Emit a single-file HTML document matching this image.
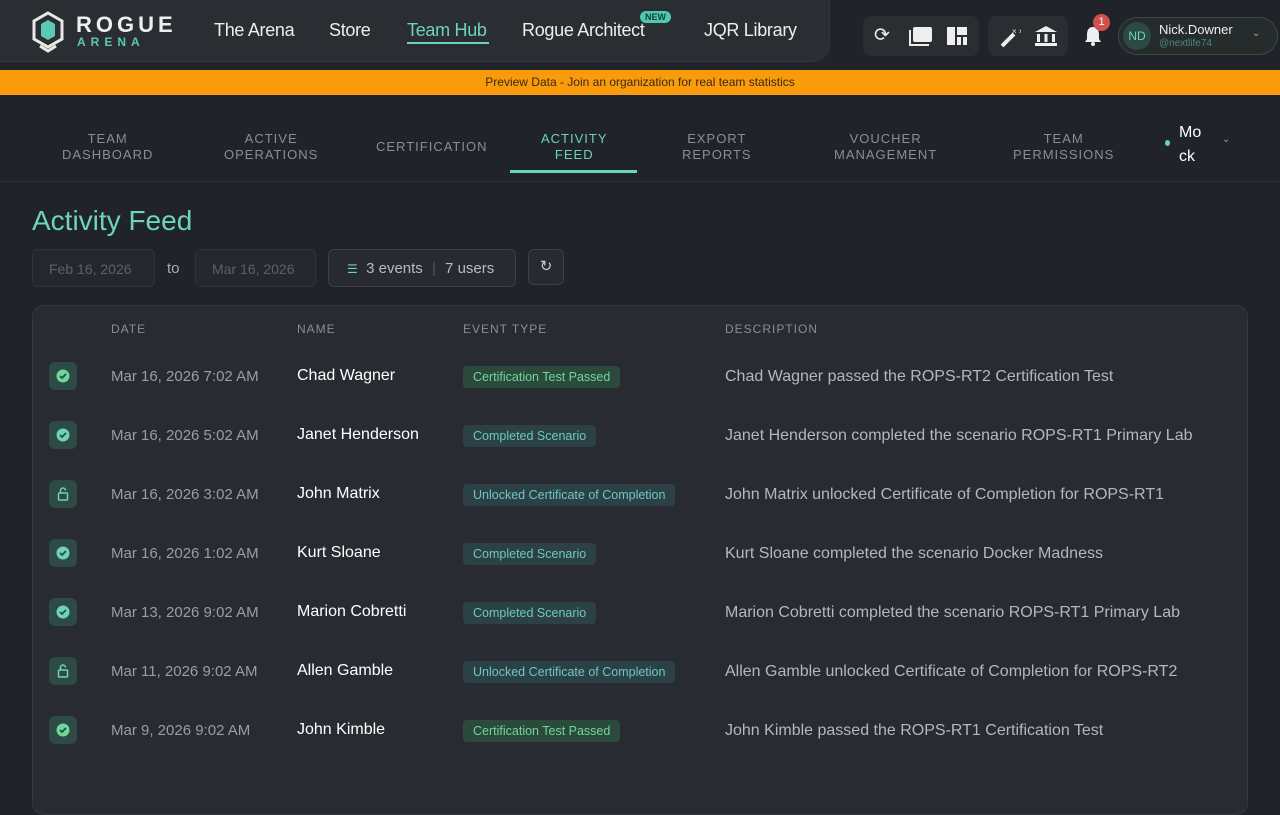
<!DOCTYPE html>
<html><head><meta charset="utf-8"><style>
*{box-sizing:border-box;margin:0;padding:0}
body{width:1280px;height:800px;overflow:hidden;background:#202329;font-family:"Liberation Sans",sans-serif;color:#ddd;position:relative}
.top{position:absolute;left:0;top:0;width:830px;height:62px;background:#2a2d32;border-bottom-right-radius:18px;border:1px solid #34373c;border-top:none;border-left:none}
.nav{position:absolute;top:20px;font-size:18px;color:#eee;letter-spacing:-0.3px}
.orange{position:absolute;left:0;top:70px;width:1280px;height:25px;background:#f99b0b;color:#3a2a10;font-size:12px;text-align:center;line-height:25px}
.grp{position:absolute;top:16px;height:40px;background:#2a2d32;border-radius:8px}
.ic{position:absolute;top:26px}
.tab{position:absolute;top:131px;font-size:13px;letter-spacing:1px;color:#8a8e94;text-align:center;line-height:16px}
.card{position:absolute;left:32px;top:305px;width:1216px;height:510px;background:#282b31;border:1px solid #35383e;border-radius:12px}
.th{position:absolute;top:322px;font-size:12px;letter-spacing:1px;color:#8a8e94}
.row{position:absolute;left:0;width:1280px;height:30px}
.row .i{position:absolute;left:49px;top:0;width:28px;height:28px;border-radius:6px;background:#2d4a44}
.row .d{position:absolute;left:111px;top:6px;font-size:15px;color:#9a9ea4}
.row .n{position:absolute;left:297px;top:5px;font-size:16px;color:#fff}
.row .b{position:absolute;left:463px;top:4px;height:22px;padding:0 10px;line-height:22px;font-size:12.5px;border-radius:4px;white-space:nowrap}
.g{background:#2b4a3c;color:#6fd69c}.t{background:#2b4145;color:#6cc9bd}
.row .s{position:absolute;left:725px;top:6px;font-size:16px;color:#b4b8bd}
.inp{position:absolute;top:249px;height:38px;border:1px solid #30333a;border-radius:6px;background:#24272c;color:#5d6168;font-size:14px;padding:11px 0 0 16px;white-space:nowrap}
</style></head><body>
<div class="top"></div>
<svg style="position:absolute;left:30px;top:11px" width="36" height="42" viewBox="0 0 36 42"><path d="M18 2 L32 10 V28 L18 36 L4 28 V10Z" fill="none" stroke="#e8e8e8" stroke-width="3"/><path d="M18 9 L25 13 V25 L18 29 L11 25 V13Z" fill="#5cc9b5"/><path d="M10 35 L18 40 L26 35" fill="none" stroke="#e8e8e8" stroke-width="3"/></svg>
<div style="position:absolute;left:76px;top:12px;font-size:22px;font-weight:bold;letter-spacing:4px;color:#eee">ROGUE</div>
<div style="position:absolute;left:77px;top:35px;font-size:12px;letter-spacing:5px;color:#5cc9b5;font-weight:bold">ARENA</div>
<div class="nav" style="left:214px">The Arena</div>
<div class="nav" style="left:329px">Store</div>
<div class="nav" style="left:407px;color:#6cd3bd">Team Hub</div>
<div style="position:absolute;left:407px;top:42px;width:82px;height:2px;background:#6cd3bd"></div>
<div class="nav" style="left:522px">Rogue Architect</div>
<div style="position:absolute;left:640px;top:11px;background:#4fc9b1;color:#143;font-size:9px;font-weight:bold;padding:1px 5px;border-radius:6px">NEW</div>
<div class="nav" style="left:704px">JQR Library</div>
<div class="grp" style="left:863px;width:116px"></div>
<div class="grp" style="left:988px;width:80px"></div>
<div class="ic" style="left:874px;font-size:19px;color:#eee;top:24px">⟳</div>
<svg class="ic" style="left:909px" width="24" height="20"><rect x="4" y="1" width="19" height="15" rx="2" fill="#eee"/><path d="M1 4 V19 H20" stroke="#eee" stroke-width="2" fill="none"/></svg>
<svg class="ic" style="left:947px;top:27px" width="20" height="18"><rect x="0" y="0" width="8" height="18" fill="#eee"/><rect x="10" y="0" width="10" height="8" fill="#eee"/><rect x="10" y="10" width="4" height="8" fill="#eee"/><rect x="16" y="10" width="4" height="8" fill="#eee"/></svg>
<svg class="ic" style="left:999px" width="22" height="22"><path d="M3 20 L15 8" stroke="#eee" stroke-width="4"/><text x="13" y="8" font-size="8" fill="#eee">× ×</text></svg>
<svg class="ic" style="left:1034px;top:25px" width="24" height="22"><path d="M12 1 L23 7 H1Z" fill="#eee"/><rect x="3" y="9" width="3" height="8" fill="#eee"/><rect x="10.5" y="9" width="3" height="8" fill="#eee"/><rect x="18" y="9" width="3" height="8" fill="#eee"/><rect x="1" y="18" width="22" height="3" fill="#eee"/></svg>
<svg class="ic" style="left:1083px;top:25px" width="20" height="22"><path d="M10 2 C5 2 4 6 4 10 V14 L2 17 H18 L16 14 V10 C16 6 15 2 10 2Z" fill="#eee"/><circle cx="10" cy="19" r="2" fill="#eee"/></svg>
<div style="position:absolute;left:1093px;top:14px;width:17px;height:17px;border-radius:50%;background:#d34f4f;color:#fff;font-size:11px;text-align:center;line-height:17px">1</div>
<div style="position:absolute;left:1118px;top:17px;width:160px;height:38px;border:1px solid #3a4a46;border-radius:19px;background:#262b2c"></div>
<div style="position:absolute;left:1123px;top:22px;width:28px;height:28px;border-radius:50%;background:#2c4a44;color:#6cd3bd;font-size:12px;text-align:center;line-height:28px">ND</div>
<div style="position:absolute;left:1159px;top:22px;font-size:13px;color:#eee">Nick.Downer</div>
<div style="position:absolute;left:1159px;top:38px;font-size:10px;color:#4a8a7c">@nextlife74</div>
<div style="position:absolute;left:1252px;top:28px;font-size:10px;color:#aaa">⌄</div>
<div class="orange">Preview Data - Join an organization for real team statistics</div>
<div class="tab" style="left:62px">TEAM<br>DASHBOARD</div>
<div class="tab" style="left:224px">ACTIVE<br>OPERATIONS</div>
<div class="tab" style="left:376px;top:139px">CERTIFICATION</div>
<div class="tab" style="left:541px;color:#6cd3bd">ACTIVITY<br>FEED</div>
<div style="position:absolute;left:510px;top:170px;width:127px;height:3px;background:#6cd3bd"></div>
<div class="tab" style="left:682px">EXPORT<br>REPORTS</div>
<div class="tab" style="left:834px">VOUCHER<br>MANAGEMENT</div>
<div class="tab" style="left:1013px">TEAM<br>PERMISSIONS</div>
<div style="position:absolute;left:1165px;top:140px;width:5px;height:6px;border-radius:50%;background:#6cd3bd"></div>
<div style="position:absolute;left:1179px;top:121px;font-size:16px;color:#fff;line-height:24px">Mo<br>ck</div>
<div style="position:absolute;left:1222px;top:134px;font-size:10px;color:#999">⌄</div>
<div style="position:absolute;left:0;top:181px;width:1280px;height:1px;background:#2e3136"></div>
<div style="position:absolute;left:32px;top:205px;font-size:28px;color:#6cd3bd">Activity Feed</div>
<div class="inp" style="left:32px;width:123px">Feb 16, 2026</div>
<div style="position:absolute;left:167px;top:260px;font-size:15px;color:#aaa">to</div>
<div class="inp" style="left:195px;width:121px">Mar 16, 2026</div>
<div style="position:absolute;left:328px;top:249px;width:188px;height:38px;border:1px solid #3c4046;border-radius:6px;background:#272a30;color:#bbb;font-size:15px;padding:10px 0 0 18px;white-space:nowrap"><span style="color:#6cd3bd;font-size:12px">☰</span>&nbsp; 3 events <span style="color:#555;margin:0 5px">|</span> 7 users</div>
<div style="position:absolute;left:528px;top:249px;width:36px;height:36px;border:1px solid #3c4046;border-radius:6px;background:#272a30;color:#ccc;font-size:15px;text-align:center;line-height:34px">↻</div>
<div class="card"></div>
<div class="th" style="left:111px">DATE</div>
<div class="th" style="left:297px">NAME</div>
<div class="th" style="left:463px">EVENT TYPE</div>
<div class="th" style="left:725px">DESCRIPTION</div>

<div class="row" style="top:362px"><div class="i"><svg width="28" height="28"><circle cx="14" cy="14" r="6.5" fill="#6fd69c"/><path d="M11 14 L13 16 L17 12" stroke="#2d4a44" stroke-width="1.8" fill="none"/></svg></div><div class="d">Mar 16, 2026 7:02 AM</div><div class="n">Chad Wagner</div><div class="b g">Certification Test Passed</div><div class="s">Chad Wagner passed the ROPS-RT2 Certification Test</div></div>
<div class="row" style="top:421px"><div class="i"><svg width="28" height="28"><circle cx="14" cy="14" r="6.5" fill="#6cd3bd"/><path d="M11 14 L13 16 L17 12" stroke="#2d4a44" stroke-width="1.8" fill="none"/></svg></div><div class="d">Mar 16, 2026 5:02 AM</div><div class="n">Janet Henderson</div><div class="b t">Completed Scenario</div><div class="s">Janet Henderson completed the scenario ROPS-RT1 Primary Lab</div></div>
<div class="row" style="top:480px"><div class="i"><svg width="28" height="28"><rect x="9.5" y="13" width="9" height="7" rx="1" fill="none" stroke="#6cd3bd" stroke-width="1.5"/><path d="M11.5 13 V10.5 A2.5 2.5 0 0 1 16.5 10.5" fill="none" stroke="#6cd3bd" stroke-width="1.5"/></svg></div><div class="d">Mar 16, 2026 3:02 AM</div><div class="n">John Matrix</div><div class="b t">Unlocked Certificate of Completion</div><div class="s">John Matrix unlocked Certificate of Completion for ROPS-RT1</div></div>
<div class="row" style="top:539px"><div class="i"><svg width="28" height="28"><circle cx="14" cy="14" r="6.5" fill="#6cd3bd"/><path d="M11 14 L13 16 L17 12" stroke="#2d4a44" stroke-width="1.8" fill="none"/></svg></div><div class="d">Mar 16, 2026 1:02 AM</div><div class="n">Kurt Sloane</div><div class="b t">Completed Scenario</div><div class="s">Kurt Sloane completed the scenario Docker Madness</div></div>
<div class="row" style="top:598px"><div class="i"><svg width="28" height="28"><circle cx="14" cy="14" r="6.5" fill="#6cd3bd"/><path d="M11 14 L13 16 L17 12" stroke="#2d4a44" stroke-width="1.8" fill="none"/></svg></div><div class="d">Mar 13, 2026 9:02 AM</div><div class="n">Marion Cobretti</div><div class="b t">Completed Scenario</div><div class="s">Marion Cobretti completed the scenario ROPS-RT1 Primary Lab</div></div>
<div class="row" style="top:657px"><div class="i"><svg width="28" height="28"><rect x="9.5" y="13" width="9" height="7" rx="1" fill="none" stroke="#6cd3bd" stroke-width="1.5"/><path d="M11.5 13 V10.5 A2.5 2.5 0 0 1 16.5 10.5" fill="none" stroke="#6cd3bd" stroke-width="1.5"/></svg></div><div class="d">Mar 11, 2026 9:02 AM</div><div class="n">Allen Gamble</div><div class="b t">Unlocked Certificate of Completion</div><div class="s">Allen Gamble unlocked Certificate of Completion for ROPS-RT2</div></div>
<div class="row" style="top:716px"><div class="i"><svg width="28" height="28"><circle cx="14" cy="14" r="6.5" fill="#6fd69c"/><path d="M11 14 L13 16 L17 12" stroke="#2d4a44" stroke-width="1.8" fill="none"/></svg></div><div class="d">Mar 9, 2026 9:02 AM</div><div class="n">John Kimble</div><div class="b g">Certification Test Passed</div><div class="s">John Kimble passed the ROPS-RT1 Certification Test</div></div>
</body></html>
